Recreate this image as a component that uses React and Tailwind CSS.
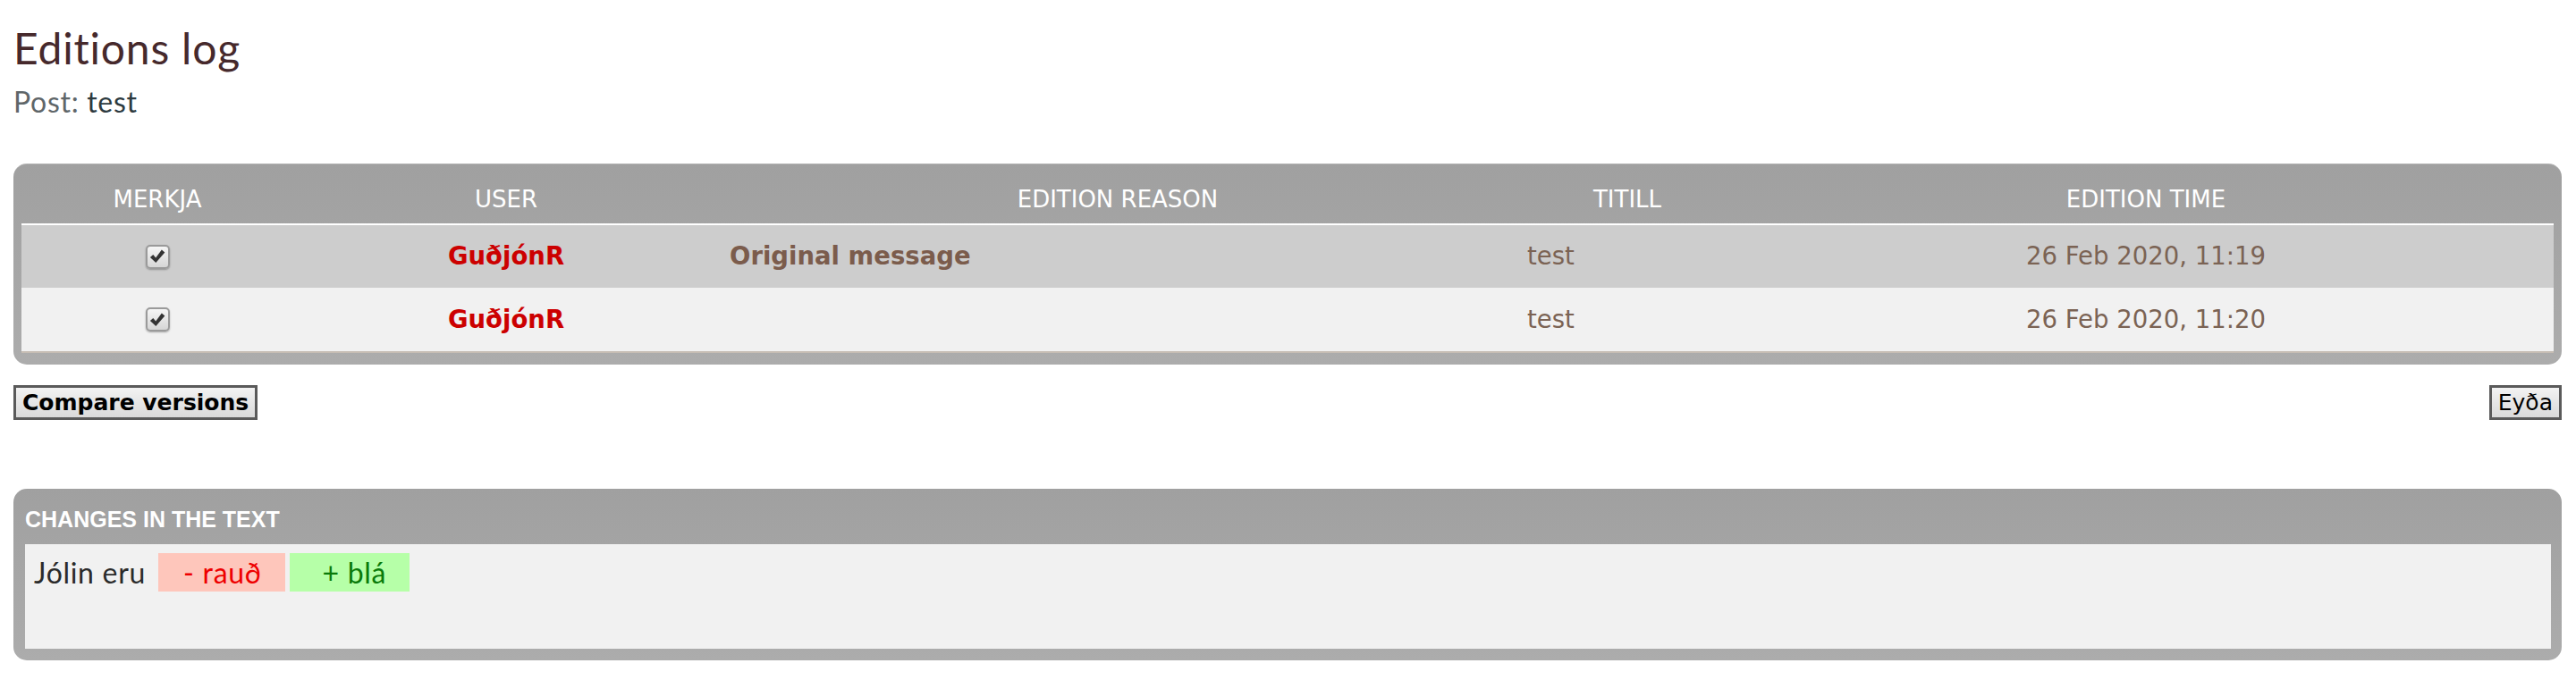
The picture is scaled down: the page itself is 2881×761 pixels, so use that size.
import React from "react";

function Check() {
  return (
    <div className="w-[27px] h-[27px] rounded-[5px] border-2 border-[#9a9a9a] bg-linear-to-b from-[#f6f6f6] to-[#d6d6d6] shadow-[0_1px_2px_rgba(0,0,0,0.3)] flex items-center justify-center mx-auto">
      <svg width="18" height="18" viewBox="0 0 16 16">
        <path d="M0.8 8.8 L3.8 6.2 L6.4 9.3 L12.3 1.4 L15.4 3.9 L6.5 14.2 Z" fill="#333" />
      </svg>
    </div>
  );
}

const rows = [
  { bg: "bg-[#cdcdcd]", h: "h-[71px]", reason: "Original message", date: "26 Feb 2020, 11:19" },
  { bg: "bg-[#f1f1f1]", h: "h-[72px]", reason: "", date: "26 Feb 2020, 11:20" },
];

export default function App() {
  return (
    <div className="bg-white h-[761px] overflow-hidden pl-[15px] pr-[16px] pt-[30px]">
      <h1 className="font-['Lato',sans-serif] text-[48px] leading-[48px] tracking-[0.8px] font-normal text-[#46292c]">
        Editions log
      </h1>
      <p className="mt-[20px] font-['Lato',sans-serif] text-[32px] leading-[32px] tracking-[0.7px] text-[#5f6669]">
        Post: <span className="text-[#2d3a40]">test</span>
      </p>

      <div className="mt-[53px] rounded-[15px] bg-linear-to-b from-[#a0a0a0] to-[#acacac] border-t border-[#b2b2b2] px-[9px] pt-[7px] pb-[13px]">
        <table className="w-full table-fixed border-collapse font-['DejaVu_Sans',sans-serif]">
          <colgroup>
            <col className="w-[304px]" />
            <col className="w-[476px]" />
            <col className="w-[892px]" />
            <col className="w-[248px]" />
            <col />
          </colgroup>
          <thead>
            <tr className="h-[60px] border-b-2 border-white text-white text-[26px] font-normal uppercase">
              <th className="font-normal pt-[6px] text-center">Merkja</th>
              <th className="font-normal pt-[6px] text-center">User</th>
              <th className="font-normal pt-[6px] text-center">Edition reason</th>
              <th className="font-normal pt-[6px] text-center">Titill</th>
              <th className="font-normal pt-[6px] text-center">Edition time</th>
            </tr>
          </thead>
          <tbody className="text-[27.5px] text-[#7b6354]">
            {rows.map((r, i) => (
              <tr
                key={i}
                className={`${r.bg} ${r.h} ${i === rows.length - 1 ? "border-b-2 border-[#c6bdb4]" : ""}`}
              >
                <td className="text-center align-middle">
                  <Check />
                </td>
                <td className="text-center font-bold text-[#cc0000]">GuðjónR</td>
                <td className="pl-[12px] font-bold text-[#7b5c4c]">{r.reason}</td>
                <td className="pl-[12px]">test</td>
                <td className="text-center">{r.date}</td>
              </tr>
            ))}
          </tbody>
        </table>
      </div>

      <div className="mt-[23px] flex justify-between items-start font-['DejaVu_Sans',sans-serif] text-[25px] leading-[29px] text-black">
        <button className="border-[3px] border-[#5a5a5a] bg-linear-to-b from-[#f2f2f2] to-[#dadada] px-[7px] py-[2px] font-bold">
          Compare versions
        </button>
        <button className="border-[3px] border-[#5a5a5a] bg-linear-to-b from-[#f2f2f2] to-[#dadada] px-[7px] py-[2px] font-normal">
          Eyða
        </button>
      </div>

      <div className="mt-[77px] rounded-[15px] bg-linear-to-b from-[#a0a0a0] to-[#acacac] pl-[13px] pr-[12px] pb-[13px]">
        <div className="h-[62px] pt-[8px] flex items-center font-['Liberation_Sans',Arial,sans-serif] font-bold text-[25px] text-white uppercase">
          Changes in the text
        </div>
        <div className="h-[117px] bg-[#f1f1f1] pt-[10px] pl-[10px]">
          <div className="flex items-baseline font-['Lato',sans-serif] text-[32px] leading-[43px] tracking-[0.7px] text-[#2b2b2b]">
            <span>Jólin eru</span>
            <span className="ml-[14px] inline-block h-[43px] bg-[#fec6bb] text-[#ee0000] pl-[28px] pr-[26px]">- rauð</span>
            <span className="ml-[5px] inline-block h-[43px] bg-[#b6ffa8] text-[#0a7a0a] pl-[37px] pr-[26px]">+ blá</span>
          </div>
        </div>
      </div>
    </div>
  );
}
